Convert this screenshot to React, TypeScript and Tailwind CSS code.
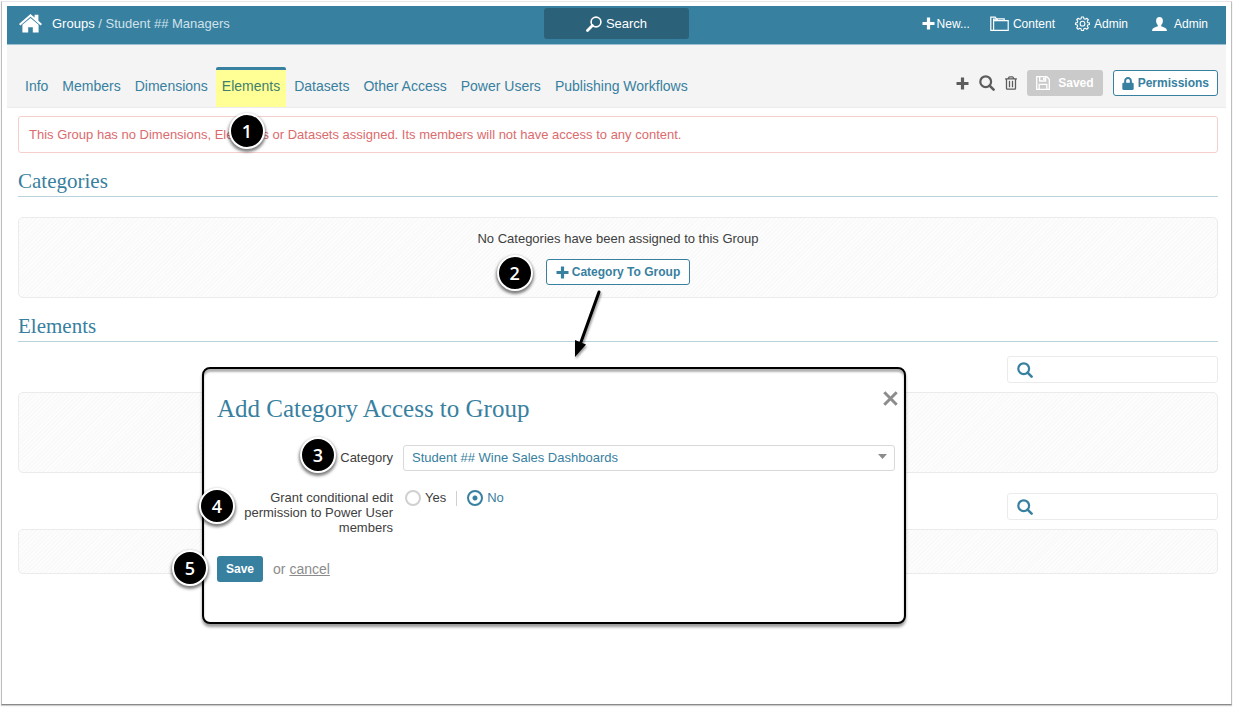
import { useState } from "react";
import { FaLock, FaRegTrashAlt } from "react-icons/fa";

const tabs = [
  "Info",
  "Members",
  "Dimensions",
  "Elements",
  "Datasets",
  "Other Access",
  "Power Users",
  "Publishing Workflows",
];

const panelClass =
  "rounded-[5px] border border-[#ebebeb] bg-[repeating-linear-gradient(135deg,#f9f9f9_0px,#f9f9f9_1px,#fdfdfd_2px,#fdfdfd_3px)]";

function HomeIcon() {
  return (
    <svg className="h-[19px] w-[23px]" viewBox="0 0 23 19" fill="currentColor">
      <path d="M11.5 0 0 10l1.4 1.5L11.5 2.8l10.1 8.7L23 10l-3.6-3.2V.8h-3.8v2.8z" />
      <path d="M11.5 3.9 3.4 10.8V18.5h5.8v-5.2h4.6v5.2h5.8v-7.7z" />
    </svg>
  );
}

function LoupeIcon() {
  return (
    <svg className="h-4 w-4" viewBox="0 0 16 16" fill="none" stroke="currentColor">
      <circle cx="10" cy="6" r="4.9" strokeWidth="1.6" />
      <path d="M6.4 9.6 1.5 14.500" strokeWidth="2.8" strokeLinecap="round" />
    </svg>
  );
}

function PlusIcon() {
  return (
    <svg className="h-[13px] w-[13px]" viewBox="0 0 13 13" fill="none" stroke="currentColor" strokeWidth="3.2">
      <path d="M6.500.500v12M.500 6.500h12" />
    </svg>
  );
}

function SearchIcon() {
  return (
    <svg className="h-4 w-4" viewBox="0 0 16 16" fill="none" stroke="currentColor">
      <circle cx="6.700" cy="6.700" r="5.400" strokeWidth="2.200" />
      <path d="m10.600 10.600 4 4" strokeWidth="2.600" strokeLinecap="round" />
    </svg>
  );
}

function ContentIcon() {
  return (
    <svg className="h-4 w-[19px]" viewBox="0 0 19 16" fill="none" stroke="currentColor" strokeWidth="1.2">
      <path d="M3.6 14.4H.8V1.2h4.4l1.2 1.6h7.8v1.6" />
      <path d="M3.6 14.4V4.6h14.6v9.8z" />
      <path d="M3.6 4.6V3.2h3.2l1 1.4" />
    </svg>
  );
}

function GearIcon() {
  return (
    <svg className="h-[15px] w-[15px]" viewBox="0 0 24 24" fill="none" stroke="currentColor" strokeWidth="1.7" strokeLinejoin="round">
      <path d="M10.3 1.5h3.4l.6 3 2 .8 2.6-1.7 2.4 2.4-1.7 2.6.8 2 3 .6v2.4l-3 .6-.8 2 1.7 2.6-2.4 2.4-2.6-1.7-2 .8-.6 3h-3.4l-.6-3-2-.8-2.6 1.7-2.4-2.4 1.7-2.6-.8-2-3-.6v-2.4l3-.6.8-2-1.7-2.6 2.4-2.4 2.6 1.7 2-.8z" />
      <circle cx="12" cy="12.2" r="3.8" />
    </svg>
  );
}

function UserIcon() {
  return (
    <svg className="h-[14px] w-[15px]" viewBox="0 0 15 14" fill="currentColor">
      <path d="M7.5 0C5.3 0 4.1 1.6 4.1 3.7c0 1.700.7 3.400 1.700 4.300v1.300C4.700 10 .9 10.700.4 12.200L0 14h15l-.4-1.800c-.5-1.500-4.300-2.200-5.400-2.900V8c1-.9 1.700-2.600 1.700-4.300C10.900 1.600 9.700 0 7.500 0z" />
    </svg>
  );
}

function DiskIcon() {
  return (
    <svg className="h-[14px] w-[14px]" viewBox="0 0 14 14" fill="none" stroke="currentColor" strokeWidth="1.3">
      <path d="M.7.7h10.100l2.500 2.500v10.100H.7z" />
      <path d="M3.700.7v4.300h6V.7M3.200 13.300V8.300h7.600v5" />
      <path d="M7.900 1.400v2.600" strokeWidth="1.700" />
    </svg>
  );
}

function CloseIcon() {
  return (
    <svg className="h-[15px] w-[15px]" viewBox="0 0 15 15" fill="none" stroke="currentColor" strokeWidth="3">
      <path d="m1.300 1.300 12.400 12.400M13.700 1.300 1.300 13.700" />
    </svg>
  );
}

function Step({ n, className }: { n: number; className: string }) {
  return (
    <span
      className={`absolute z-20 flex h-9 w-9 items-center justify-center rounded-full border-2 border-white bg-black font-['Open_Sans',sans-serif] text-lg leading-none font-semibold text-white shadow-[0_2px_3px_1px_rgba(0,0,0,0.5)] ${className}`}
    >
      {n}
    </span>
  );
}

function SectionTitle({ children }: { children: string }) {
  return (
    <h2 className="border-b border-[#b9d3dc] pb-[3px] font-['Liberation_Serif',serif] text-[21px] leading-6 text-[#3880a0]">
      {children}
    </h2>
  );
}

function SearchField({ label }: { label: string }) {
  return (
    <label className="ml-auto flex h-[27px] w-[211px] items-center gap-2 rounded-[3px] border border-[#ebebeb] bg-white pl-[9px] text-[#3880a0]">
      <SearchIcon />
      <input type="text" aria-label={label} className="min-w-0 flex-1 outline-none" />
    </label>
  );
}

function AddCategoryDialog() {
  const [edit, setEdit] = useState("no");

  return (
    <div
      role="dialog"
      aria-label="Add Category Access to Group"
      className="absolute top-[361px] left-[195px] z-10 h-[257px] w-[704px] rounded-lg border-2 border-black bg-white pr-[9px] pl-[13px] shadow-[0_3px_3px_rgba(0,0,0,0.4),inset_0_3px_2px_rgba(0,0,0,0.3)]"
    >
      <div className="flex items-start justify-between pt-[22px]">
        <h2 className="pt-[2px] font-['Liberation_Serif',serif] text-[25px] leading-8 text-[#3880a0]">
          Add Category Access to Group
        </h2>
        <button type="button" aria-label="Close" className="-mr-[3px] text-[#8c8c8c]">
          <CloseIcon />
        </button>
      </div>

      <form onSubmit={(e) => e.preventDefault()}>
        <div className="mt-5 grid grid-cols-[176px_1fr] items-center gap-x-[10px]">
          <div className="relative text-right">
            <Step n={3} className="-top-3 left-[83px]" />
            <label htmlFor="category">Category</label>
          </div>
          <div className="relative">
            <select
              id="category"
              className="h-[26px] w-full appearance-none rounded-[3px] border border-[#d9d9d9] bg-white px-2 text-[#3880a0]"
            >
              <option>Student ## Wine Sales Dashboards</option>
            </select>
            <svg className="pointer-events-none absolute top-[9px] right-2 h-[5px] w-[9px] text-[#8c8c8c]" viewBox="0 0 9 5">
              <path d="M0 0h9L4.500 5z" fill="currentColor" />
            </svg>
          </div>
        </div>

        <div
          role="radiogroup"
          aria-labelledby="grant-label"
          className="relative mt-[19px] grid grid-cols-[176px_1fr] items-start gap-x-3"
        >
          <Step n={4} className="-top-[2px] -left-[18px]" />
          <p id="grant-label" className="pl-5 text-right leading-[15px]">
            Grant conditional edit permission to Power User members
          </p>
          <div className="flex items-center leading-4">
            <label className={`flex items-center gap-1 ${edit === "yes" ? "text-[#3880a0]" : ""}`}>
              <input
                type="radio"
                name="edit"
                checked={edit === "yes"}
                onChange={() => setEdit("yes")}
                className="h-4 w-4 appearance-none rounded-full border-2 border-[#d0d0d0] checked:border-[#3880a0] checked:bg-[radial-gradient(circle,#3880a0_2px,white_3px)]"
              />
              Yes
            </label>
            <span className="mx-[10px] h-[15px] w-px bg-[#d0d0d0]" />
            <label className={`flex items-center gap-1 ${edit === "no" ? "text-[#3880a0]" : ""}`}>
              <input
                type="radio"
                name="edit"
                checked={edit === "no"}
                onChange={() => setEdit("no")}
                className="h-4 w-4 appearance-none rounded-full border-2 border-[#d0d0d0] checked:border-[#3880a0] checked:bg-[radial-gradient(circle,#3880a0_2px,white_3px)]"
              />
              No
            </label>
          </div>
        </div>

        <div className="relative mt-[21px] flex items-center gap-[10px] text-sm text-[#8c8c8c]">
          <Step n={5} className="-top-[6px] -left-[45px]" />
          <button type="submit" className="h-[26px] rounded-[3px] bg-[#3880a0] px-[9px] text-xs font-bold text-white">
            Save
          </button>
          <span>
            or{" "}
            <a href="#" className="underline">
              cancel
            </a>
          </span>
        </div>
      </form>
    </div>
  );
}

export default function App() {
  return (
    <div className="flex min-h-screen bg-white p-px pb-[2px] font-['Liberation_Sans',Arial,sans-serif] text-[13px] leading-[18px] text-[#404040]">
      <div className="flex-1 border border-t-[#e6e6e6] border-r-[#bdbdbd] border-b-[#8a8a8a] border-l-[#bdbdbd] px-[5px] pt-1 shadow-[0_1px_1px_rgba(0,0,0,0.2)]">
        <div className="relative">
          <header className="grid h-[39px] grid-cols-[1fr_145px_1fr] items-center border-b border-[#9cc0cf] bg-[#3880a0] pb-[3px] text-white">
            <div className="flex items-center gap-[10px] pl-3">
              <a href="#" aria-label="Home">
                <HomeIcon />
              </a>
              <nav aria-label="Breadcrumb" className="text-[#cfe2ea]">
                <a href="#" className="text-white">
                  Groups
                </a>{" "}
                / Student ## Managers
              </nav>
            </div>
            <button type="button" className="flex h-[31px] items-center justify-center gap-1 rounded-[3px] bg-[#2b6179]">
              <LoupeIcon />
              Search
            </button>
            <nav className="flex items-center justify-end pr-[18px] text-xs">
              <a href="#" className="mr-5 flex items-center gap-[2px]">
                <PlusIcon />
                New...
              </a>
              <a href="#" className="mr-5 flex items-center gap-1">
                <ContentIcon />
                Content
              </a>
              <a href="#" className="mr-6 flex items-center gap-1">
                <GearIcon />
                Admin
              </a>
              <a href="#" className="flex items-center gap-[7px]">
                <UserIcon />
                Admin
              </a>
            </nav>
          </header>

          <div className="flex h-[63px] items-end justify-between border-b border-[#ececec] bg-[#f4f4f4] pr-2 pl-3">
            <nav className="flex gap-[2px] text-sm leading-[18px] text-[#3880a0]">
              {tabs.map((tab) =>
                tab === "Elements" ? (
                  <div key={tab} className="relative">
                    <a
                      href="#"
                      aria-current="page"
                      className="block h-10 rounded-t-[2px] border-t-[3px] border-[#3880a0] bg-[#ffff96] px-[6px] pt-[7px] text-[#3f7f6c]"
                    >
                      {tab}
                    </a>
                    <Step n={1} className="top-[46px] left-[13px]" />
                  </div>
                ) : (
                  <a key={tab} href="#" className="block h-10 px-[6px] pt-[10px]">
                    {tab}
                  </a>
                )
              )}
            </nav>
            <div className="flex items-center gap-[10px] pb-[11px] text-[#5c5c5c]">
              <button type="button" aria-label="Add">
                <PlusIcon />
              </button>
              <button type="button" aria-label="Search">
                <SearchIcon />
              </button>
              <button type="button" aria-label="Delete">
                <FaRegTrashAlt className="h-[14px] w-3" />
              </button>
              <button
                type="button"
                disabled
                className="flex h-[26px] items-center gap-2 rounded-[3px] bg-[#cacaca] px-[9px] text-xs font-bold text-white"
              >
                <DiskIcon />
                Saved
              </button>
              <button
                type="button"
                className="flex h-[26px] items-center gap-1 rounded-[3px] border border-[#3880a0] bg-white px-2 text-xs font-bold text-[#3880a0]"
              >
                <FaLock className="h-[13px] w-3" />
                Permissions
              </button>
            </div>
          </div>

          <main className="pt-2 pr-2 pl-[11px]">
            <p role="alert" className="rounded-[3px] border border-[#f5cfcc] px-[10px] pt-[9px] pb-2 text-[#db6b6e]">
              This Group has no Dimensions, Elements or Datasets assigned. Its members will not have access to any content.
            </p>

            <section className="mt-4">
              <SectionTitle>Categories</SectionTitle>
              <div className={`mt-5 flex flex-col items-center gap-[11px] py-3 ${panelClass}`}>
                <p>No Categories have been assigned to this Group</p>
                <div className="relative">
                  <Step n={2} className="-top-1 -left-[49px]" />
                  <button
                    type="button"
                    className="flex h-[26px] items-center gap-[3px] rounded-[3px] border border-[#3880a0] bg-white px-[9px] text-xs font-bold text-[#3880a0]"
                  >
                    <PlusIcon />
                    Category To Group
                  </button>
                  <svg
                    className="absolute top-full left-[22px] z-20 h-[76px] w-10 drop-shadow-[1px_2px_1px_rgba(0,0,0,0.4)]"
                    viewBox="0 0 40 76"
                  >
                    <path d="M31 7 13 57" stroke="black" strokeWidth="3" strokeLinecap="round" />
                    <path d="M7 72V55l11 4.500z" fill="black" />
                  </svg>
                </div>
              </div>
            </section>

            <section className="mt-4">
              <SectionTitle>Elements</SectionTitle>
              <div className="mt-[14px]">
                <SearchField label="Search elements" />
                <div className={`mt-[9px] h-[81px] ${panelClass}`} />
              </div>
              <div className="mt-5">
                <SearchField label="Search assigned elements" />
                <div className={`mt-[9px] h-[45px] ${panelClass}`} />
              </div>
            </section>
          </main>

          <AddCategoryDialog />
        </div>
      </div>
    </div>
  );
}
